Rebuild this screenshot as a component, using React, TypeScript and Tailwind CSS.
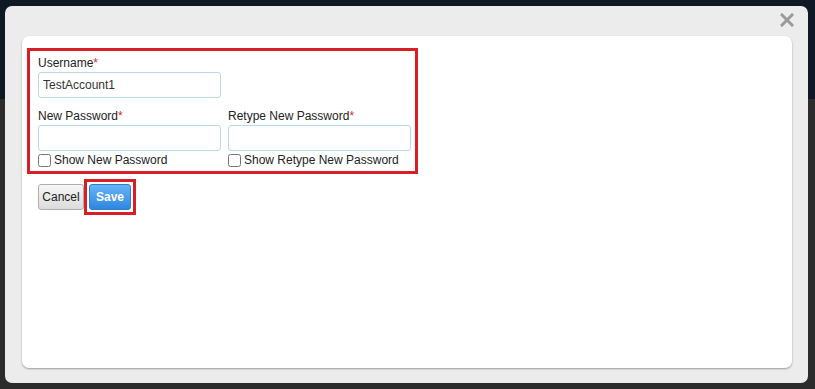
import React, { useState } from 'react';

const font = { fontFamily: '"Liberation Sans", Arial, sans-serif' };

const Field: React.FC<{
  label: string;
  value?: string;
  check?: string;
  onCheck?: () => void;
  checked?: boolean;
}> = ({ label, value, check, checked, onCheck }) => (
  <div className="flex w-[183px] flex-col">
    <label className="h-[14px] text-[12px] leading-[14px] text-[#222]">
      {label}
      <span className="text-[#e0262b]">*</span>
    </label>
    <input
      type={check && !checked ? 'password' : 'text'}
      defaultValue={value}
      className="mt-[2px] h-[26px] w-[183px] rounded-[3px] border border-[#b7d9e8] px-[4px] text-[12px] text-[#333] outline-none"
    />
    {check && (
      <label className="mt-[2px] flex h-[14px] items-center gap-[3px] whitespace-nowrap text-[12px] leading-[14px] text-[#222]">
        <input
          type="checkbox"
          checked={checked}
          onChange={onCheck}
          className="m-0 h-[13px] w-[13px]"
        />
        {check}
      </label>
    )}
  </div>
);

export default function App() {
  const [showNew, setShowNew] = useState(false);
  const [showRetype, setShowRetype] = useState(false);

  return (
    <div className="relative h-[389px] w-[815px] overflow-hidden bg-[#2c2c2c]" style={font}>
      <div className="h-[99px] bg-[#0e1925]" />

      {/* modal */}
      <div className="absolute left-[5px] top-[6px] flex h-[377px] w-[803px] flex-col rounded-[7px] bg-[#ececec]">
        <div className="flex h-[30px] justify-end pr-[14px] pt-[6px]">
          <svg width="14" height="14" viewBox="0 0 14 14" className="mt-[1px]">
            <path d="M2 2 L12 12 M12 2 L2 12" stroke="#9a9a9a" strokeWidth="3" strokeLinecap="square" />
          </svg>
        </div>
        <div className="ml-[17px] h-[332px] w-[770px] rounded-[7px] bg-white px-[5px] pt-[12px] shadow-[0_1px_2px_rgba(0,0,0,0.35)]">
          <div className="w-[391px] border-[3px] border-[#d91f26] px-[8px] pb-[4px] pt-[5px]">
            <Field label="Username" value="TestAccount1" />
            <div className="mt-[11px] flex gap-[7px]">
              <Field
                label="New Password"
                check="Show New Password"
                checked={showNew}
                onCheck={() => setShowNew(!showNew)}
              />
              <Field
                label="Retype New Password"
                check="Show Retype New Password"
                checked={showRetype}
                onCheck={() => setShowRetype(!showRetype)}
              />
            </div>
          </div>
          <div className="mt-[5px] flex items-center pl-[11px]">
            <button className="h-[26px] w-[46px] rounded-[3px] border border-[#adadad] bg-gradient-to-b from-[#f6f6f6] to-[#dcdcdc] text-[12px] text-[#222]">
              Cancel
            </button>
            <div className="border-[3px] border-[#d91f26] p-[2px]">
              <button className="h-[26px] w-[42px] rounded-[3px] border border-[#2f7fc9] bg-gradient-to-b from-[#67b4f5] to-[#2d87e0] text-[12px] font-bold text-white">
                Save
              </button>
            </div>
          </div>
        </div>
      </div>
    </div>
  );
}
